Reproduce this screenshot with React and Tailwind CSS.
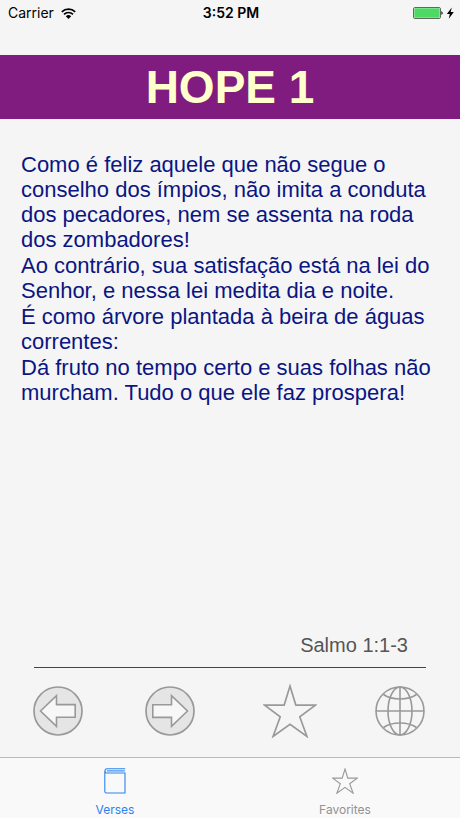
const verses = [
  'Como é feliz aquele que não segue o conselho dos ímpios, não imita a conduta dos pecadores, nem se assenta na roda dos zombadores!',
  'Ao contrário, sua satisfação está na lei do Senhor, e nessa lei medita dia e noite.',
  'É como árvore plantada à beira de águas correntes:',
  'Dá fruto no tempo certo e suas folhas não murcham. Tudo o que ele faz prospera!',
];

function StatusBar() {
  return (
    <div className="grid h-[26px] grid-cols-3 items-center pr-[6px] pl-2 font-[Inter,sans-serif] text-[14px] leading-[26px] text-black">
      <div className="flex items-center gap-[7px]">
        <span>Carrier</span>
        <svg viewBox="0 0 15 11" className="h-[11px] w-[15px]" aria-hidden="true">
          <g fill="none" stroke="currentColor" strokeWidth="1.7">
            <path d="M0.8 3.9a9.6 9.6 0 0 1 13.4 0" />
            <path d="M3 6.3a6.5 6.5 0 0 1 9 0" />
          </g>
          <path d="M7.5 11 4.8 8.2a3.9 3.9 0 0 1 5.4 0Z" fill="currentColor" />
        </svg>
      </div>
      <span className="text-center font-semibold">3:52 PM</span>
      <div className="flex items-center justify-end">
        <svg viewBox="0 0 41 12" className="h-3 w-[41px]" aria-hidden="true">
          <rect x="0.5" y="0.5" width="27" height="11" rx="1.5" fill="#fff" stroke="#5d6b5f" />
          <rect x="1.3" y="1.3" width="25.4" height="9.4" rx="0.8" fill="#4cd964" />
          <path d="M28.4 4.2c1.6.3 1.6 3.3 0 3.6Z" fill="#000" />
          <path d="M38.8 0.4 33.8 6.9h3l-1 4.8 5-6.7h-3.1Z" fill="#000" />
        </svg>
      </div>
    </div>
  );
}

function ArrowIcon({ className }) {
  return (
    <svg viewBox="0 0 50 50" className={className} fill="none" stroke="#999" aria-hidden="true">
      <circle cx="25" cy="25" r="24" fill="#e5e5e5" strokeWidth="1.7" />
      <path d="M7.5 25 23.5 9.6v9h18.7v12.6H23.5v9.2Z" fill="#f7f7f7" strokeWidth="1.6" />
    </svg>
  );
}

function StarIcon({ className, strokeWidth }) {
  return (
    <svg viewBox="1 1 52 52" className={className} fill="none" stroke="#999" strokeWidth={strokeWidth} aria-hidden="true">
      <path d="M27 3 32.6 21.3H51.5L36.4 32.5 43.3 51.5 27 39.8 10.7 51.5 17.6 32.5 2.5 21.3H21.4Z" />
    </svg>
  );
}

function GlobeIcon({ className }) {
  return (
    <svg viewBox="0 0 50 50" className={className} fill="none" stroke="#999" strokeWidth="1.6" aria-hidden="true">
      <circle cx="25" cy="25" r="24" />
      <ellipse cx="25" cy="25" rx="12" ry="24" />
      <path d="M25 1v48M1 25h48" />
      <path d="M8.5 8.5C17 14.5 33 14.5 41.5 8.5M8.5 41.5C17 35.5 33 35.5 41.5 41.5" />
    </svg>
  );
}

function BookIcon({ className }) {
  return (
    <svg viewBox="0 0 22 26" className={className} fill="none" stroke="currentColor" strokeWidth="1.1" aria-hidden="true">
      <path d="M21.2 0.8H3C0.4 0.8 0.4 5 3 5h18v20H2.5Q0.8 25 0.8 23.2V3" />
      <path d="M3 2.9h17.8" />
    </svg>
  );
}

export default function App() {
  return (
    <div className="flex min-h-screen flex-col bg-[#f5f5f5] font-['Liberation_Sans',Arial,sans-serif]">
      <StatusBar />

      <header className="mt-[29px] bg-[#801b80] text-center">
        <h1 className="text-[46px] leading-[64px] font-bold text-[#ffffcc]">HOPE 1</h1>
      </header>

      <main className="flex flex-1 flex-col">
        <div className="flex-1 space-y-px px-[21px] pt-[33px] text-[22px] leading-[25px] text-[#0b1582]">
          {verses.map((verse) => (
            <p key={verse}>{verse}</p>
          ))}
        </div>

        <p className="px-[52px] text-right text-[20px] leading-[24px] text-[#555]">Salmo 1:1-3</p>
        <hr className="mx-[34px] mt-[10px] h-px border-0 bg-[#801b80]" />

        <div className="grid grid-cols-2 gap-[68px] pt-4 pr-[35px] pb-[19px] pl-[33px]">
          <div className="flex items-center justify-between">
            <button type="button" aria-label="Previous verse">
              <ArrowIcon className="size-[50px]" />
            </button>
            <button type="button" aria-label="Next verse">
              <ArrowIcon className="size-[50px] rotate-180" />
            </button>
          </div>
          <div className="flex items-center justify-between">
            <button type="button" aria-label="Add to favorites">
              <StarIcon className="size-[54px]" strokeWidth="1.6" />
            </button>
            <button type="button" aria-label="Change language">
              <GlobeIcon className="size-[50px]" />
            </button>
          </div>
        </div>
      </main>

      <nav className="grid grid-cols-2 border-t border-[#b9b9b9] bg-[#f9f9f9] font-[Inter,sans-serif] text-[12px] leading-4">
        <a href="#verses" className="flex flex-col items-center gap-2 pt-[10px] text-[#2b83ee]">
          <BookIcon className="h-[26px] w-[22px]" />
          Verses
        </a>
        <a href="#favorites" className="flex flex-col items-center gap-2 pt-[10px] text-[#929292]">
          <StarIcon className="size-[26px]" strokeWidth="2.2" />
          Favorites
        </a>
      </nav>
    </div>
  );
}
